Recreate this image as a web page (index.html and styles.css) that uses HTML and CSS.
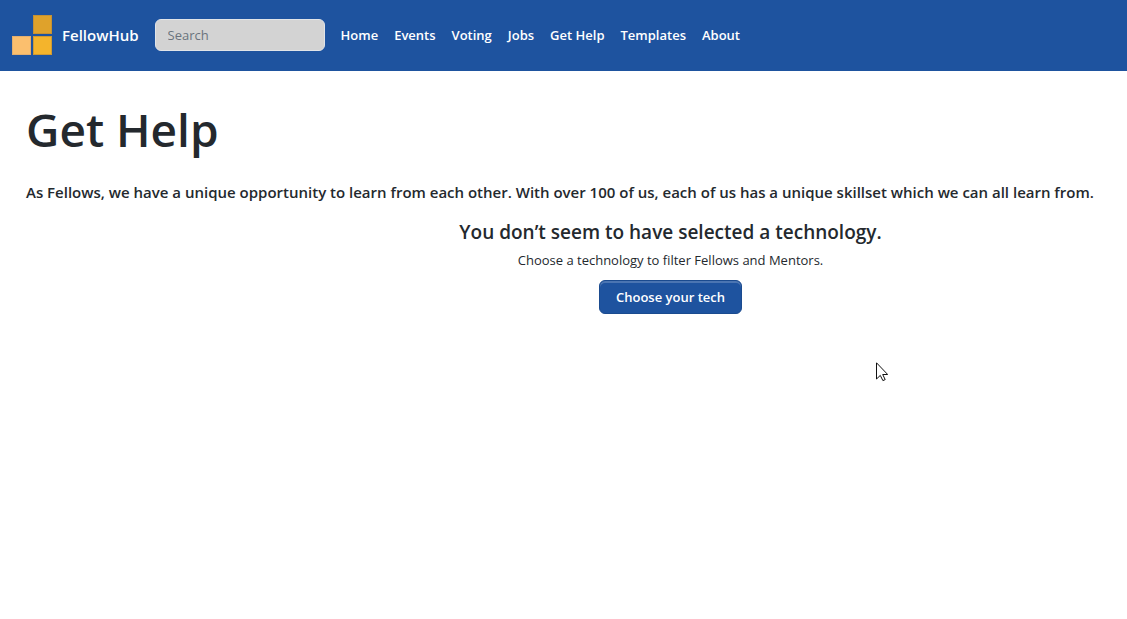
FILE: index.html
```html
<!DOCTYPE html>
<html lang="en">
<head>
<meta charset="utf-8">
<meta name="viewport" content="width=device-width, initial-scale=1">
<title>Get Help - FellowHub</title>
<link rel="stylesheet" href="styles.css">
</head>
<body>
<header class="navbar">
  <a class="brand" href="#">
    <svg class="logo" viewBox="0 0 40 40" aria-hidden="true">
      <rect x="21.5" y=".5" width="18" height="18" fill="#dfa22b" stroke="#c59134"/>
      <rect x=".5" y="21.5" width="18" height="18" fill="#fbbf6e" stroke="#e3af70"/>
      <rect x="21.5" y="21.5" width="18" height="18" fill="#f4b42c" stroke="#cf9a34"/>
    </svg>
    <span>FellowHub</span>
  </a>
  <input class="search" type="search" placeholder="Search" aria-label="Search">
  <nav class="links">
    <a href="#">Home</a>
    <a href="#">Events</a>
    <a href="#">Voting</a>
    <a href="#">Jobs</a>
    <a href="#">Get Help</a>
    <a href="#">Templates</a>
    <a href="#">About</a>
  </nav>
</header>
<main class="page">
  <h1 class="title">Get Help</h1>
  <p class="intro">As Fellows, we have a unique opportunity to learn from each other. With over 100 of us, each of us has a unique skillset which we can all learn from.</p>
  <section class="empty">
    <h2 class="empty-title">You don’t seem to have selected a technology.</h2>
    <p class="empty-text">Choose a technology to filter Fellows and Mentors.</p>
    <button class="button" type="button">Choose your tech</button>
  </section>
</main>
<svg class="cursor" viewBox="0 0 12 20" aria-hidden="true">
  <path d="M.5.8V17l3.8-3.6 2.6 5.2 2.3-1-2.5-5.1h5Z" fill="#fff" stroke="#111"/>
</svg>
</body>
</html>
```
FILE: styles.css
```css
* {
  box-sizing: border-box;
}

body {
  margin: 0;
  background: #fff;
  color: #24292e;
  font-family: "Open Sans", "Noto Sans", sans-serif;
  font-size: 13px;
  line-height: 20px;
}

.navbar {
  display: flex;
  align-items: center;
  gap: 16px;
  padding: 15px 12px 16px;
  background: #1e539f;
  color: #fff;
}

.brand {
  display: flex;
  align-items: center;
  gap: 10px;
  color: #fff;
  font-size: 15px;
  font-weight: 600;
  text-decoration: none;
}

.logo {
  width: 40px;
  height: 40px;
}

.search {
  width: 170px;
  height: 32px;
  padding: 0 12px;
  border: 1px solid #e1e4e8;
  border-radius: 6px;
  background: #d3d3d3;
  color: #24292e;
  font: inherit;
  appearance: none;
}

.search::placeholder {
  color: #6a737d;
  opacity: 1;
}

.links {
  display: flex;
  flex-wrap: wrap;
  gap: 16px;
}

.links a {
  color: #fff;
  font-weight: 600;
  text-decoration: none;
}

.page {
  padding: 22px 26px;
}

.title {
  margin: 0;
  font-size: 46px;
  font-weight: 600;
  line-height: 72px;
}

.intro {
  margin: 15px 0 14px;
  font-size: 15px;
  font-weight: 600;
  line-height: 24px;
}

.empty {
  display: flex;
  flex-direction: column;
  align-items: center;
  margin-left: 214px;
}

.empty-title {
  margin: 0;
  font-size: 19px;
  font-weight: 600;
  line-height: 28px;
}

.empty-text {
  margin: 4px 0 10px;
}

.button {
  padding: 6px 16px;
  border: 1px solid #1b4b8f;
  border-radius: 6px;
  background: #1e539f;
  box-shadow: inset 0 2px 0 #4b75b2;
  color: #fff;
  font: inherit;
  font-weight: 600;
}

.cursor {
  position: absolute;
  top: 362px;
  left: 876px;
  width: 12px;
  height: 20px;
}
```
